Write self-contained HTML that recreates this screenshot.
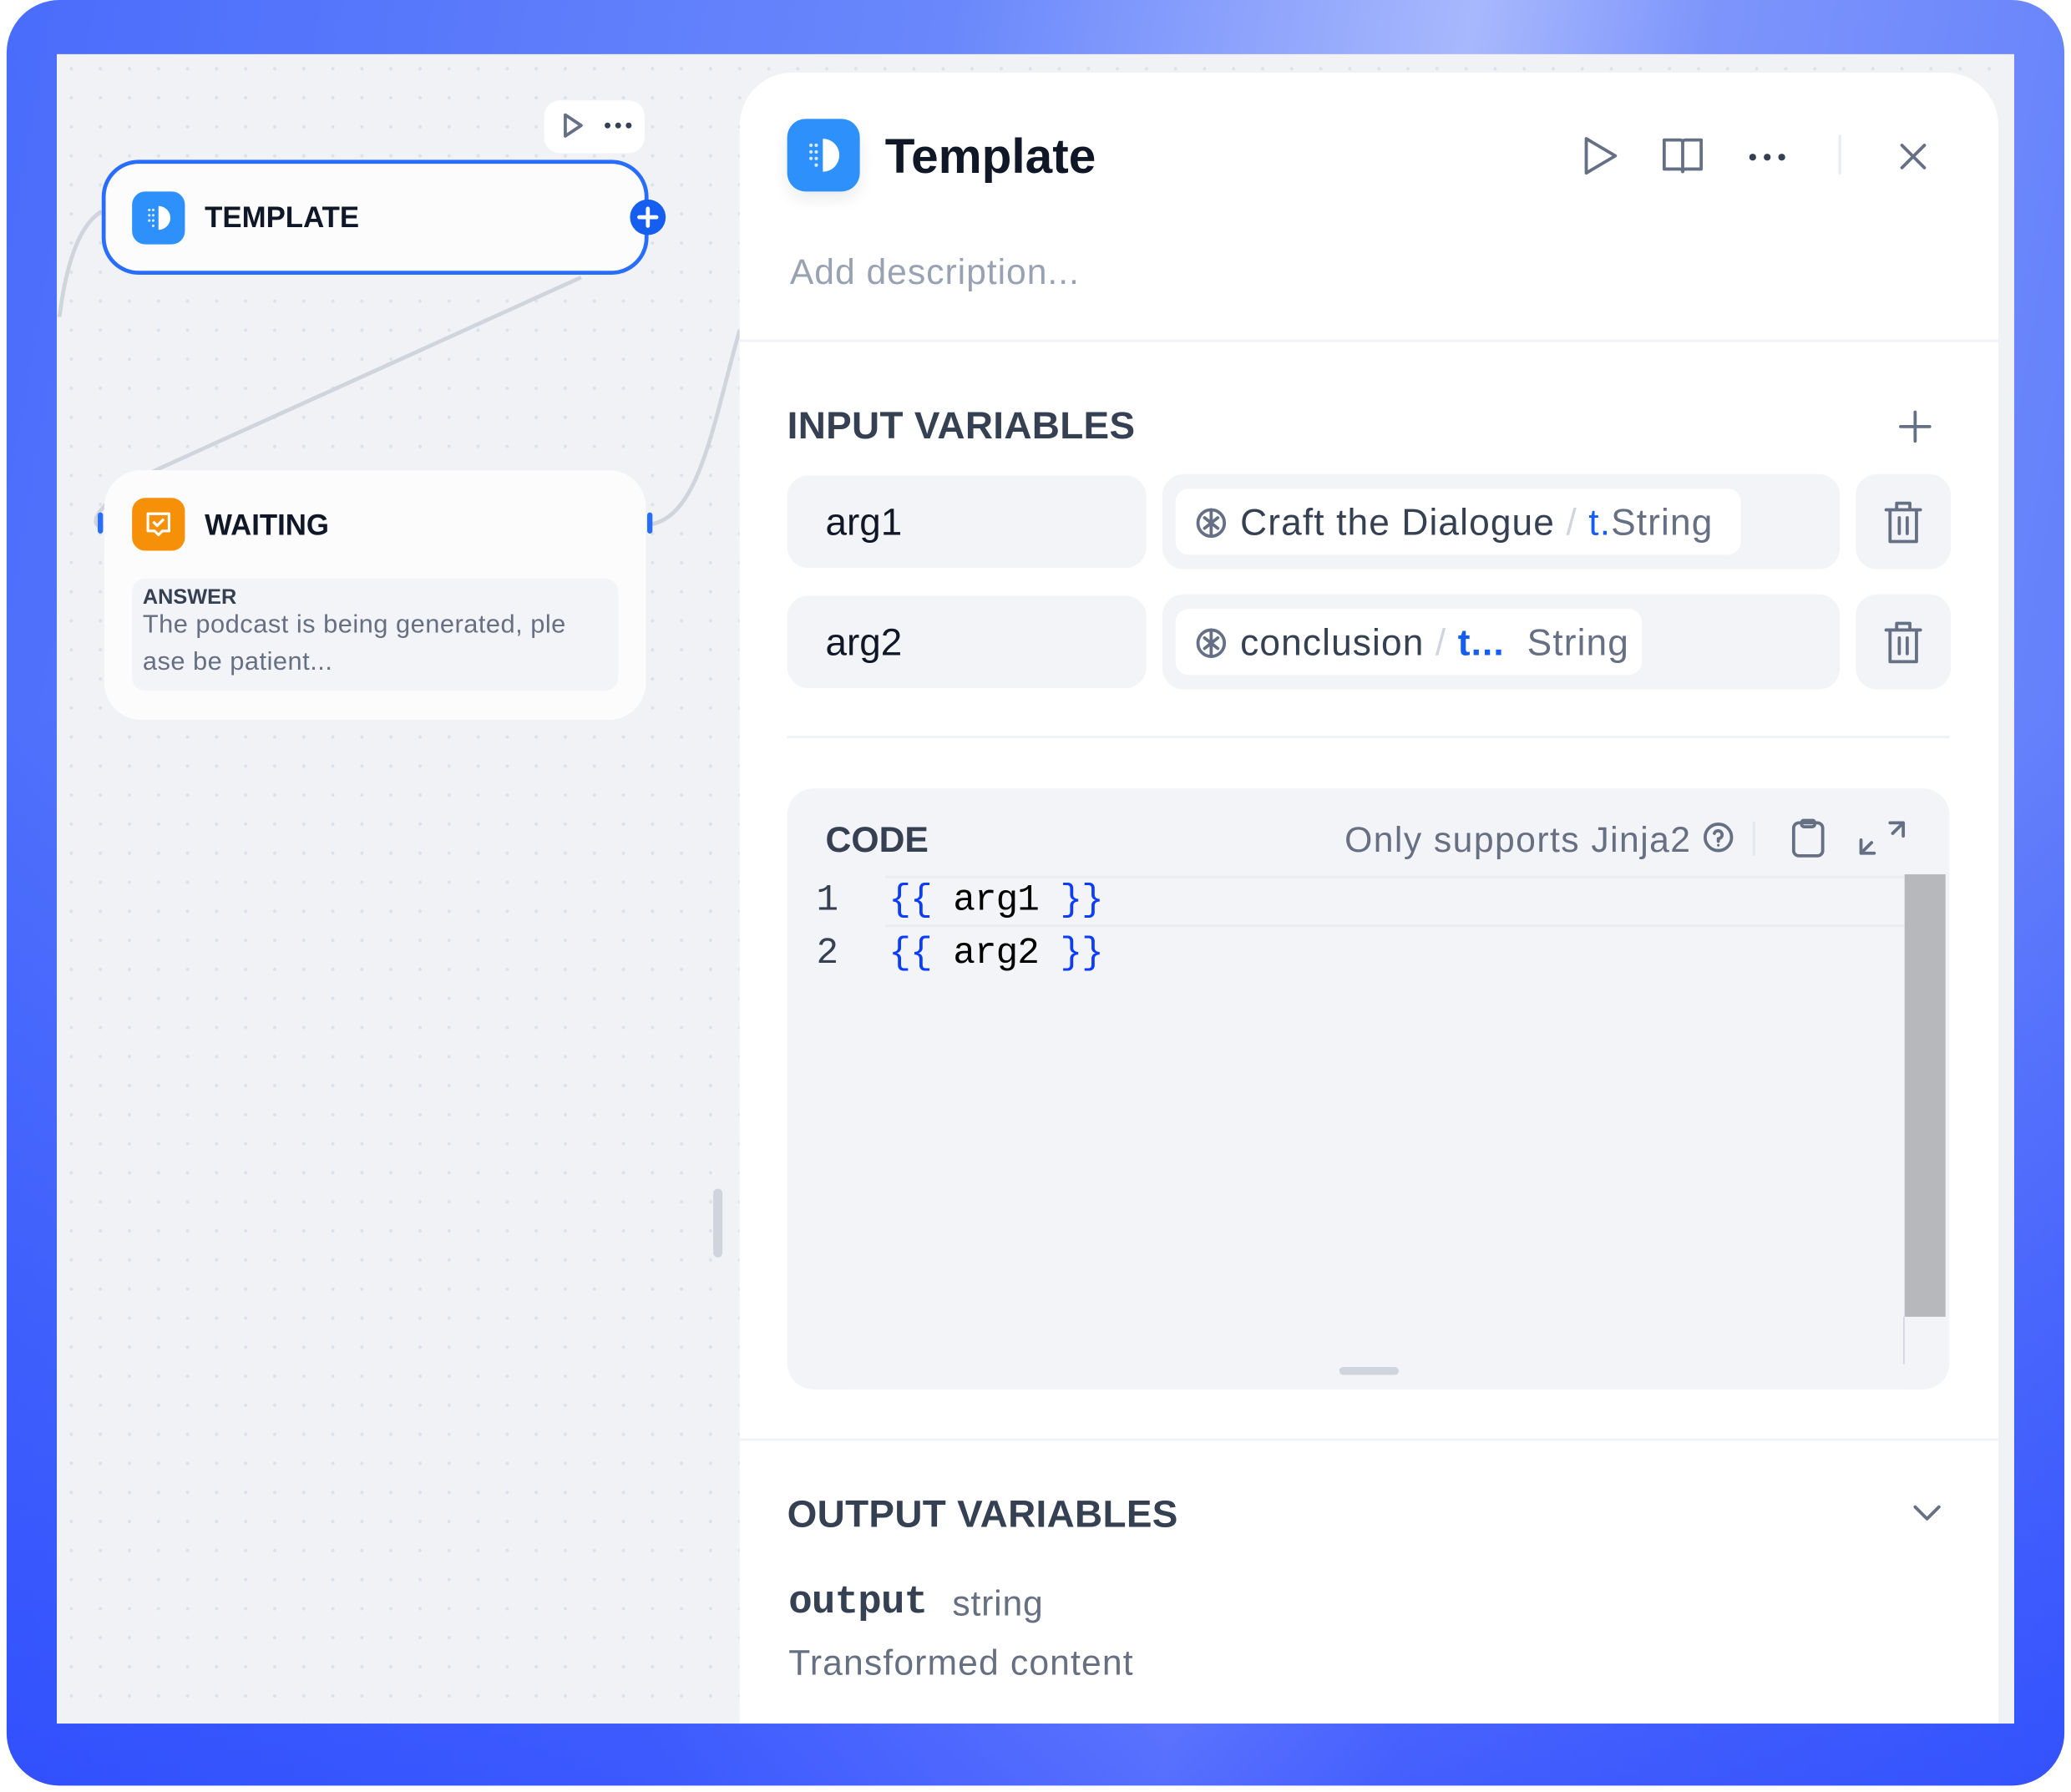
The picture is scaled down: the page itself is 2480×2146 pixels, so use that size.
<!DOCTYPE html>
<html><head><meta charset="utf-8"><style>
*{box-sizing:border-box;margin:0;padding:0}
html,body{width:2480px;height:2146px;overflow:hidden;background:#fff;font-family:"Liberation Sans",sans-serif}
#s{position:absolute;left:0;top:0;width:1568px;height:1357px;transform:scale(1.58163);transform-origin:0 0}
.a{position:absolute}
.frame{left:5px;top:0;width:1558px;height:1352px;border-radius:40px;background:linear-gradient(100deg,#4a6cfb 0%,#6a88fb 40%,#a8b8fd 62%,#7d95fb 72%,#5a78fb 100%);overflow:hidden}
.frame:after{content:"";position:absolute;inset:0;background:linear-gradient(180deg,rgba(0,0,0,0) 0%,rgba(20,40,255,.0) 40%,rgba(20,50,255,.55) 100%)}
.canvas{left:43px;top:41px;width:1482px;height:1264px;background-color:#f0f2f6;background-image:radial-gradient(#dde1e8 1.2px,transparent 1.3px);background-size:22px 22px;overflow:hidden}
.panel{left:560px;top:55px;width:953px;height:1250px;background:#fff;border-top-left-radius:40px;border-top-right-radius:40px}
.t{position:absolute;white-space:nowrap}
.gray{background:#f2f4f7}
.ico{stroke:#667085;fill:none;stroke-width:2.4;stroke-linecap:round;stroke-linejoin:round}
.mono{font-family:"Liberation Mono","DejaVu Sans Mono",monospace}
</style></head><body><div id="s">
<div class="a frame"></div>
<div class="a canvas"></div>
<svg class="a" style="left:0;top:0" width="1568" height="1357">
<path d="M440 210 L120 355" stroke="#d0d5dd" stroke-width="3" fill="none"/>
<path d="M77 160 C60 170 50 200 45 240" stroke="#d0d5dd" stroke-width="3" fill="none"/>
<path d="M120 355 C90 370 60 395 78 400" stroke="#d0d5dd" stroke-width="3" fill="none"/>
<path d="M493 397 C530 390 540 320 560 250" stroke="#d0d5dd" stroke-width="3" fill="none"/>
<rect x="540" y="900" width="7" height="52" rx="3.5" fill="#d0d5dd"/>
</svg>
<div class="a" style="left:412px;top:76px;width:76px;height:40px;background:#fff;border-radius:12px"></div>
<svg class="a" style="left:424px;top:84px" width="60" height="24"><path d="M4 3 L16 11 L4 19 Z" class="ico" stroke-width="1.8"/><circle cx="36" cy="11" r="2.2" fill="#354052"/><circle cx="44" cy="11" r="2.2" fill="#354052"/><circle cx="52" cy="11" r="2.2" fill="#354052"/></svg>
<div class="a" style="left:77px;top:121px;width:414px;height:87px;background:#fcfcfd;border:3px solid #296dff;border-radius:28px"></div>
<div class="a" style="left:100px;top:145px;width:40px;height:40px;background:#2e90fa;border-radius:10px"></div>
<svg class="a" style="left:100px;top:145px" width="40" height="40"><path d="M20 11 A9 9 0 0 1 20 29 Z" fill="#fff"/><g fill="#fff" opacity=".8"><circle cx="13" cy="14" r="1"/><circle cx="16" cy="14" r="1"/><circle cx="13" cy="18" r="1"/><circle cx="16" cy="18" r="1"/><circle cx="13" cy="22" r="1"/><circle cx="16" cy="22" r="1"/><circle cx="16" cy="26" r="1"/></g></svg>
<div class="t" style="left:155px;top:152px;font-size:22px;font-weight:700;color:#101828">TEMPLATE</div>
<div class="a" style="left:477px;top:151px;width:27px;height:27px;border-radius:50%;background:#155eef"></div>
<svg class="a" style="left:477px;top:151px" width="27" height="27"><path d="M13.5 7v13M7 13.5h13" stroke="#fff" stroke-width="3" stroke-linecap="round"/></svg>
<div class="a" style="left:74px;top:388px;width:4px;height:16px;background:#296dff;border-radius:2px"></div>
<div class="a" style="left:490px;top:388px;width:4px;height:16px;background:#296dff;border-radius:2px"></div>
<div class="a" style="left:79px;top:356px;width:410px;height:189px;background:#fcfcfd;border-radius:28px"></div>
<div class="a" style="left:100px;top:377px;width:40px;height:40px;background:#f79009;border-radius:10px"></div>
<svg class="a" style="left:100px;top:377px" width="40" height="40"><path d="M12 12h16v13h-5l-3 3-3-3h-5z" fill="none" stroke="#fff" stroke-width="2" stroke-linejoin="round"/><path d="M16 18l3 3 5-5" fill="none" stroke="#fff" stroke-width="2"/></svg>
<div class="t" style="left:155px;top:385px;font-size:22px;font-weight:700;color:#101828">WAITING</div>
<div class="a gray" style="left:100px;top:438px;width:368px;height:85px;border-radius:10px"></div>
<div class="t" style="left:108px;top:444px;font-size:16px;font-weight:700;color:#354052">ANSWER</div>
<div class="t" style="left:108px;top:459px;font-size:19.5px;line-height:28px;color:#676f83;letter-spacing:.3px">The podcast is being generated, ple<br>ase be patient...</div>
<div class="a panel"></div>
<div class="a" style="left:596px;top:90px;width:55px;height:55px;background:#2e90fa;border-radius:14px;box-shadow:0 6px 12px rgba(16,24,40,.08)"></div>
<svg class="a" style="left:596px;top:90px" width="55" height="55"><path d="M27 15 A12.5 12.5 0 0 1 27 40 Z" fill="#fff"/><g fill="#fff" opacity=".8"><circle cx="18" cy="20" r="1.3"/><circle cx="22" cy="20" r="1.3"/><circle cx="18" cy="25" r="1.3"/><circle cx="22" cy="25" r="1.3"/><circle cx="18" cy="30" r="1.3"/><circle cx="22" cy="30" r="1.3"/><circle cx="22" cy="35" r="1.3"/></g></svg>
<div class="t" style="left:670px;top:98px;font-size:37px;font-weight:700;color:#101828">Template</div>
<svg class="a" style="left:1190px;top:96px" width="280" height="46">
<path d="M11 9 L33 22 L11 35 Z" class="ico"/>
<path d="M70 10 h12 q2 0 2 2 v22 q0-2-2-2 h-12z M98 10 h-12 q-2 0-2 2 v22 q0-2 2-2 h12z" class="ico"/>
<circle cx="137" cy="23" r="2.6" fill="#354052"/><circle cx="148" cy="23" r="2.6" fill="#354052"/><circle cx="159" cy="23" r="2.6" fill="#354052"/>
<path d="M203 6 v30" stroke="#eaecf0" stroke-width="2"/>
<path d="M250 14 l17 17 M267 14 l-17 17" class="ico"/>
</svg>
<div class="t" style="left:598px;top:191px;font-size:27px;color:#98a2b3;letter-spacing:.6px">Add description...</div>
<div class="a" style="left:560px;top:257px;width:953px;height:2px;background:#f0f2f5"></div>
<div class="t" style="left:596px;top:307px;font-size:29px;font-weight:700;color:#354052;letter-spacing:.2px">INPUT VARIABLES</div>
<svg class="a" style="left:1436px;top:309px" width="28" height="28"><path d="M14 3v22M3 14h22" class="ico"/></svg>
<div class="a gray" style="left:596px;top:360px;width:272px;height:70px;border-radius:16px"></div>
<div class="t" style="left:625px;top:380px;font-size:29px;color:#101828">arg1</div>
<div class="a gray" style="left:880px;top:359px;width:513px;height:72px;border-radius:16px"></div>
<div class="a" style="left:890px;top:370px;width:428px;height:50px;background:#fff;border-radius:10px"></div>
<div class="t" style="left:939px;top:380px;font-size:28px;color:#354052;letter-spacing:.7px;font-weight:500">Craft the Dialogue <span style="color:#d0d5dd">/</span> <span style="color:#155eef">t.</span><span style="color:#676f83">String</span></div>
<div class="a gray" style="left:1405px;top:359px;width:72px;height:72px;border-radius:16px"></div>
<div class="a gray" style="left:596px;top:451px;width:272px;height:70px;border-radius:16px"></div>
<div class="t" style="left:625px;top:471px;font-size:29px;color:#101828">arg2</div>
<div class="a gray" style="left:880px;top:450px;width:513px;height:72px;border-radius:16px"></div>
<div class="a" style="left:890px;top:461px;width:353px;height:50px;background:#fff;border-radius:10px"></div>
<div class="t" style="left:939px;top:471px;font-size:28px;color:#354052;letter-spacing:.7px">conclusion <span style="color:#d0d5dd">/</span> <span style="color:#155eef;font-weight:700">t...</span>&nbsp; <span style="color:#676f83">String</span></div>
<div class="a gray" style="left:1405px;top:450px;width:72px;height:72px;border-radius:16px"></div>
<svg class="a" style="left:900px;top:380px" width="36" height="130">
<g class="ico" stroke="#101828" stroke-width="2.2"><circle cx="17" cy="16" r="10"/><path d="M17 6v20M12 12l5 4-5 4M22 12l-5 4 5 4"/>
<circle cx="17" cy="107" r="10"/><path d="M17 97v20M12 103l5 4-5 4M22 103l-5 4 5 4"/></g></svg>
<svg class="a" style="left:1424px;top:378px" width="34" height="130">
<g class="ico"><path d="M4 8h26M12 8V3h10v5M7 8v24h20V8M14 14v12M20 14v12"/>
<path d="M4 99h26M12 99v-5h10v5M7 99v24h20V99M14 105v12M20 105v12"/></g></svg>
<div class="a" style="left:596px;top:557px;width:880px;height:2px;background:#f0f2f5"></div>
<div class="a gray" style="left:596px;top:597px;width:880px;height:455px;border-radius:20px"></div>
<div class="t" style="left:625px;top:621px;font-size:27px;font-weight:700;color:#354052">CODE</div>
<div class="t" style="left:1018px;top:621px;font-size:27px;color:#676f83;letter-spacing:.9px">Only supports Jinja2</div>
<svg class="a" style="left:1288px;top:620px" width="170" height="32">
<circle cx="13" cy="14" r="10" class="ico" stroke-width="2"/><path d="M10 11a3 3 0 1 1 3 4v2" class="ico" stroke-width="2"/><circle cx="13" cy="20" r="1" fill="#667085"/>
<path d="M40 2v26" stroke="#e4e7ec" stroke-width="2"/>
<rect x="70" y="3" width="22" height="25" rx="4" class="ico"/><rect x="76" y="1" width="10" height="5" rx="2" class="ico" fill="#f2f4f7"/>
<path d="M143 3h10v10M153 3l-8 8M131 26h-10v-10M121 26l8-8" class="ico"/>
</svg>
<div class="a" style="left:670px;top:663px;width:772px;height:39px;border-top:2px solid #eaecf0;border-bottom:2px solid #eaecf0"></div>
<div class="a" style="left:1442px;top:662px;width:31px;height:335px;background:#b7b8bc"></div>
<div class="a" style="left:1441px;top:997px;width:1px;height:36px;background:#d0d5dd"></div>
<div class="t mono" style="left:618px;top:667px;font-size:28px;color:#354052">1</div>
<div class="t mono" style="left:618px;top:707px;font-size:28px;color:#354052">2</div>
<div class="t mono" style="left:673px;top:667px;font-size:28px;color:#000;letter-spacing:-.6px"><span style="color:#0b3cff">{{</span> arg1 <span style="color:#0b3cff">}}</span></div>
<div class="t mono" style="left:673px;top:707px;font-size:28px;color:#000;letter-spacing:-.6px"><span style="color:#0b3cff">{{</span> arg2 <span style="color:#0b3cff">}}</span></div>
<div class="a" style="left:1014px;top:1035px;width:45px;height:6px;border-radius:3px;background:#d0d5dd"></div>
<div class="a" style="left:560px;top:1089px;width:953px;height:2px;background:#f0f2f5"></div>
<div class="t" style="left:596px;top:1131px;font-size:29px;font-weight:700;color:#354052;letter-spacing:.2px">OUTPUT VARIABLES</div>
<svg class="a" style="left:1446px;top:1136px" width="26" height="20"><path d="M4 5l9 9 9-9" class="ico"/></svg>
<div class="t mono" style="left:597px;top:1197px;font-size:30px;font-weight:700;color:#354052;letter-spacing:-.5px">output</div>
<div class="t" style="left:721px;top:1199px;font-size:27px;color:#676f83;letter-spacing:.5px">string</div>
<div class="t" style="left:597px;top:1244px;font-size:27px;color:#676f83;letter-spacing:.7px">Transformed content</div>
</div></body></html>
